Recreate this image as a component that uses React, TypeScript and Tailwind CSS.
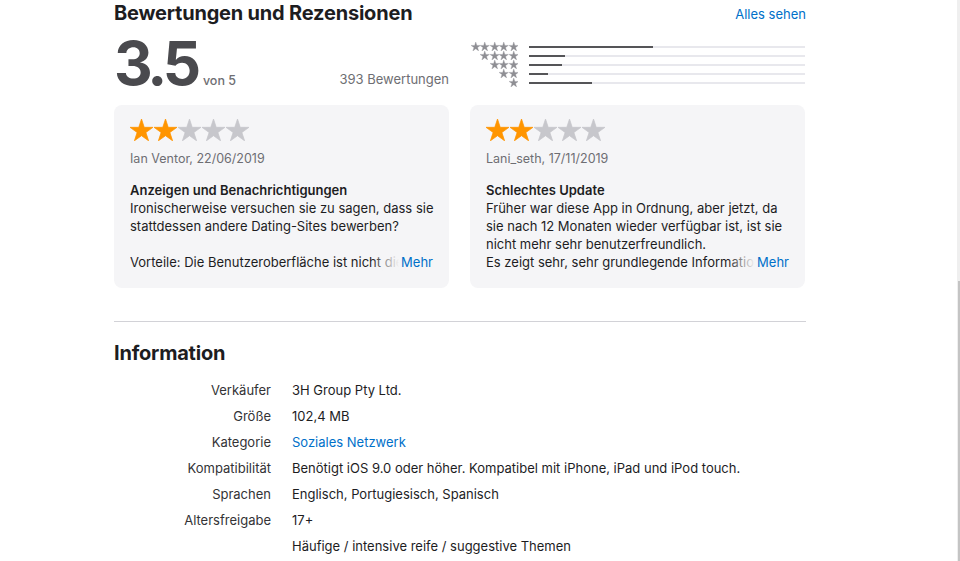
import React from "react";

const STAR = "M12 0L14.83 8.7L23.98 8.71L16.58 14.09L19.41 22.79L12 17.42L4.59 22.79L7.42 14.09L0.02 8.71L9.17 8.7Z";

function Star({ w, h, color }: { w: number; h: number; color: string }) {
  return (
    <svg width={w} height={h} viewBox="0 0 24 23" className="block shrink-0">
      <path d={STAR} fill={color} strokeLinejoin="round" stroke={color} strokeWidth={0.8} />
    </svg>
  );
}

const bars = [45, 13, 12, 7, 23];

function Card({
  author,
  title,
  lines,
  last,
}: {
  author: string;
  title: string;
  lines: string[];
  last: string;
}) {
  return (
    <div className="bg-[#f5f5f7] rounded-[8px] h-[183px] pt-[14px] pl-[16px] pr-[16px]">
      <div className="flex gap-[1px]">
        <Star w={23} h={22} color="#ff9500" />
        <Star w={23} h={22} color="#ff9500" />
        <Star w={23} h={22} color="#c7c7cc" />
        <Star w={23} h={22} color="#c7c7cc" />
        <Star w={23} h={22} color="#c7c7cc" />
      </div>
      <div className="mt-[10px] text-[12.5px] leading-[16px] text-[#6e6e73]">{author}</div>
      <div className="mt-[14px] text-[13px] leading-[18px] font-semibold text-[#1d1d1f]">{title}</div>
      <div className="text-[13px] leading-[18px] text-[#1d1d1f]">
        {lines.map((l, i) => (
          <div key={i} className="whitespace-nowrap h-[18px]">
            {l}
          </div>
        ))}
        <div className="flex h-[18px]">
          <div className="relative flex-1 overflow-hidden whitespace-nowrap">
            {last}
            <div className="absolute right-0 top-0 h-full w-[28px] bg-gradient-to-r from-[#f5f5f700] to-[#f5f5f7]" />
          </div>
          <span className="text-[#0070c9] pl-[2px]">Mehr</span>
        </div>
      </div>
    </div>
  );
}

const info: [string, string, boolean?][] = [
  ["Verkäufer", "3H Group Pty Ltd."],
  ["Größe", "102,4 MB"],
  ["Kategorie", "Soziales Netzwerk", true],
  ["Kompatibilität", "Benötigt iOS 9.0 oder höher. Kompatibel mit iPhone, iPad und iPod touch."],
  ["Sprachen", "Englisch, Portugiesisch, Spanisch"],
  ["Altersfreigabe", "17+"],
  ["", "Häufige / intensive reife / suggestive Themen"],
];

export default function App() {
  return (
    <div
      className="w-[960px] h-[561px] overflow-hidden bg-white relative text-[#1d1d1f]"
      style={{ fontFamily: "Inter, 'Liberation Sans', sans-serif" }}
    >
      <div className="ml-[114px] w-[692px]">
        <div className="flex justify-between items-center h-[26px]">
          <h2 className="text-[20px] leading-[24px] font-bold tracking-[-0.01em]">Bewertungen und Rezensionen</h2>
          <a className="text-[13px] text-[#0070c9] pt-[3px]">Alles sehen</a>
        </div>
        <div className="grid grid-cols-[335px_335px] gap-[21px] h-[79px]">
          <div className="flex items-baseline pt-[6px]">
            <span className="text-[60px] leading-[62px] font-bold text-[#4a4a4e] tracking-[-0.07em]">3.5</span>
            <span className="ml-[6px] text-[12.5px] text-[#6e6e73] font-medium">von 5</span>
            <span className="ml-auto text-[13px] text-[#6e6e73] relative top-[-1px]">393 Bewertungen</span>
          </div>
          <div className="pt-[16px] flex flex-col">
            {bars.map((b, i) => (
              <div key={i} className="flex items-center h-[9px]">
                <div className="w-[48px] flex justify-end">
                  {Array.from({ length: 5 - i }).map((_, j) => (
                    <Star key={j} w={9.5} h={9} color="#8e8e93" />
                  ))}
                </div>
                <div className="ml-[11px] flex-1 h-[2px] bg-[#e8e8ed]">
                  <div className="h-full bg-[#555558]" style={{ width: `${b}%` }} />
                </div>
              </div>
            ))}
          </div>
        </div>
        <div className="grid grid-cols-[335px_335px] gap-[21px]">
          <Card
            author="Ian Ventor, 22/06/2019"
            title="Anzeigen und Benachrichtigungen"
            lines={[
              "Ironischerweise versuchen sie zu sagen, dass sie",
              "stattdessen andere Dating-Sites bewerben?",
              "",
            ]}
            last="Vorteile: Die Benutzeroberfläche ist nicht die beste"
          />
          <Card
            author="Lani_seth, 17/11/2019"
            title="Schlechtes Update"
            lines={[
              "Früher war diese App in Ordnung, aber jetzt, da",
              "sie nach 12 Monaten wieder verfügbar ist, ist sie",
              "nicht mehr sehr benutzerfreundlich.",
            ]}
            last="Es zeigt sehr, sehr grundlegende Informationen an"
          />
        </div>
        <div className="mt-[33px] h-px bg-[#d2d2d7]" />
        <h2 className="mt-[19px] text-[20px] leading-[24px] font-bold tracking-[-0.01em]">Information</h2>
        <div className="mt-[12px] grid grid-cols-[157px_1fr] gap-x-[21px] text-[13px]">
          {info.map(([k, v, link], i) => (
            <React.Fragment key={i}>
              <div className="h-[26px] leading-[26px] text-right text-[#333336]">{k}</div>
              <div className={`h-[26px] leading-[26px] ${link ? "text-[#0070c9]" : "text-[#1d1d1f]"}`}>{v}</div>
            </React.Fragment>
          ))}
        </div>
      </div>
      <div className="fixed right-0 top-0 w-[3px] h-[561px] bg-[#efefef]">
        <div className="mt-[281px] ml-[1px] w-[2px] h-[280px] bg-[#c4c4c4]" />
      </div>
    </div>
  );
}
